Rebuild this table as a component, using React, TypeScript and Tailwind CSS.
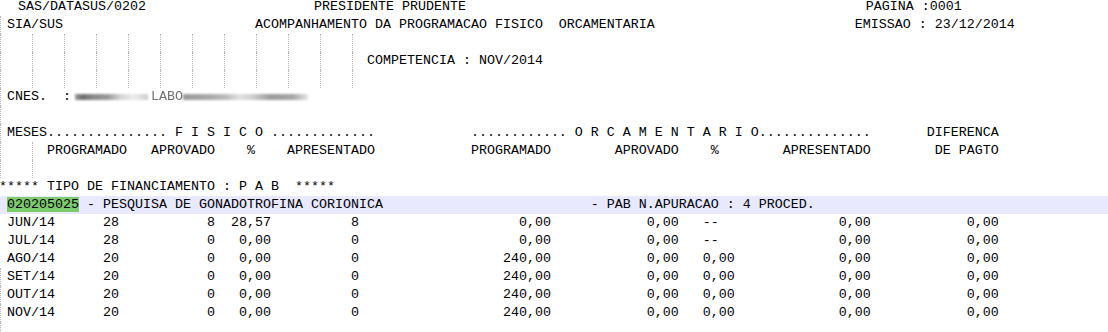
import React from "react";

function pad(parts: [number, string][]): string {
  let s = "";
  for (const [c, t] of parts) {
    while (s.length < c) s += " ";
    s += t;
  }
  return s;
}

type LineProps = {
  guides?: number[];
  start?: number;
  children?: React.ReactNode;
  className?: string;
};

function Line({ guides = [], start = 0, children, className = "" }: LineProps) {
  const cells = guides.map((g, i) => {
    const next = i + 1 < guides.length ? guides[i + 1] : start;
    return { g, w: (next - g) * 8 };
  });
  return (
    <div className={`flex h-[18px] ${className}`}>
      {cells.map(({ g, w }) => (
        <span key={g} className="h-full shrink-0 pl-[1px]" style={{ width: w }}>
          <span className="block h-full border-l border-dotted border-[#b5b5b5]" />
        </span>
      ))}
      <span className="whitespace-pre">{children}</span>
    </div>
  );
}

function T({ parts, start = 0 }: { parts: [number, string][]; start?: number }) {
  return <>{pad(parts).slice(start)}</>;
}

const wide = [0, 4, 8, 12, 16, 20, 24, 28, 32, 36, 40, 44];

type Row = {
  m: string;
  a: string;
  b: string;
  pct: string;
  c: string;
  d: string;
  e: string;
  f: string;
  g: string;
  h: string;
};

const rows: Row[] = [
  { m: "JUN/14", a: "28", b: "8", pct: "28,57", c: "8", d: "0,00", e: "0,00", f: "--", g: "0,00", h: "0,00" },
  { m: "JUL/14", a: "28", b: "0", pct: "0,00", c: "0", d: "0,00", e: "0,00", f: "--", g: "0,00", h: "0,00" },
  { m: "AGO/14", a: "20", b: "0", pct: "0,00", c: "0", d: "240,00", e: "0,00", f: "0,00", g: "0,00", h: "0,00" },
  { m: "SET/14", a: "20", b: "0", pct: "0,00", c: "0", d: "240,00", e: "0,00", f: "0,00", g: "0,00", h: "0,00" },
  { m: "OUT/14", a: "20", b: "0", pct: "0,00", c: "0", d: "240,00", e: "0,00", f: "0,00", g: "0,00", h: "0,00" },
  { m: "NOV/14", a: "20", b: "0", pct: "0,00", c: "0", d: "240,00", e: "0,00", f: "0,00", g: "0,00", h: "0,00" },
];

function rowParts(r: Row): [number, string][] {
  const right = (endCol: number, t: string): [number, string] => [endCol - t.length + 1, t];
  return [
    [1, r.m],
    [13, r.a],
    right(26, r.b),
    right(33, r.pct),
    right(44, r.c),
    right(68, r.d),
    right(84, r.e),
    [88, r.f],
    right(108, r.g),
    right(124, r.h),
  ];
}

export default function App() {
  return (
    <div className="h-[332px] w-[1108px] overflow-hidden bg-white">
      <div className="-ml-[1px] -mt-[2px] w-[1109px] font-['Liberation_Mono','Courier_New',monospace] text-[13.333px] leading-[18px] text-black">
        {/* 0 */}
        <Line className="pl-[3px]">
          <T
            parts={[
              [2, "SAS/DATASUS/0202"],
              [39, "PRESIDENTE PRUDENTE"],
              [108, "PAGINA :0001"],
            ]}
          />
        </Line>
        {/* 1 */}
        <Line guides={[0]} start={1}>
          <T
            start={1}
            parts={[
              [1, "SIA/SUS"],
              [32, "ACOMPANHAMENTO DA PROGRAMACAO FISICO  ORCAMENTARIA"],
              [107, "EMISSAO : 23/12/2014"],
            ]}
          />
        </Line>
        {/* 2 */}
        <Line guides={wide} start={46} />
        {/* 3 */}
        <Line guides={wide} start={46}>
          COMPETENCIA : NOV/2014
        </Line>
        {/* 4 */}
        <Line guides={wide} start={46} />
        {/* 5 */}
        <Line guides={[0]} start={1}>
          <span className="flex h-full items-center">
            <span className="whitespace-pre">{"CNES.  :"}</span>
            <span className="w-[4px] shrink-0" />
            <span className="h-[6px] w-[73px] shrink-0 blur-[1px] bg-[linear-gradient(90deg,#a0a0a0_0%,#6e6e6e_10%,#8a8a8a_25%,#999999_45%,#d4d4d4_62%,#ececec_80%,#cfcfcf_100%)]" />
            <span className="w-[3px] shrink-0" />
            <span className="whitespace-pre text-[#707070] blur-[0.6px]">LABO</span>
            <span className="h-[6px] w-[125px] shrink-0 blur-[1px] bg-[linear-gradient(90deg,#9a9a9a_0%,#a8a8a8_20%,#bdbdbd_35%,#e2e2e2_45%,#d0d0d0_55%,#9c9c9c_70%,#a6a6a6_88%,#e6e6e6_100%)]" />
          </span>
        </Line>
        {/* 6 */}
        <Line guides={[0]} start={1} />
        {/* 7 */}
        <Line guides={[0]} start={1}>
          <T
            start={1}
            parts={[
              [1, "MESES..............."],
              [22, "F I S I C O"],
              [34, "............."],
              [59, "............"],
              [72, "O R C A M E N T A R I O.............."],
              [116, "DIFERENCA"],
            ]}
          />
        </Line>
        {/* 8 */}
        <Line guides={[0, 4]} start={6}>
          <T
            start={6}
            parts={[
              [6, "PROGRAMADO"],
              [19, "APROVADO"],
              [31, "%"],
              [36, "APRESENTADO"],
              [59, "PROGRAMADO"],
              [77, "APROVADO"],
              [89, "%"],
              [98, "APRESENTADO"],
              [117, "DE PAGTO"],
            ]}
          />
        </Line>
        {/* 9 */}
        <Line guides={[0, 4]} start={6} />
        {/* 10 */}
        <Line>***** TIPO DE FINANCIAMENTO : P A B  *****</Line>
        {/* 11 */}
        <Line className="bg-[#e8e8ff]">
          <span className="whitespace-pre"> </span>
          <span className="bg-[#7ccb6e]">020205025</span>
          <T
            start={10}
            parts={[
              [10, " - PESQUISA DE GONADOTROFINA CORIONICA"],
              [74, "- PAB N.APURACAO : 4 PROCED."],
            ]}
          />
        </Line>
        {rows.map((r, i) => (
          <Line key={r.m} guides={i >= 3 ? [0] : []} start={i >= 3 ? 1 : 0}>
            <T start={i >= 3 ? 1 : 0} parts={rowParts(r)} />
          </Line>
        ))}
        <Line guides={[0]} start={1} />
      </div>
    </div>
  );
}
